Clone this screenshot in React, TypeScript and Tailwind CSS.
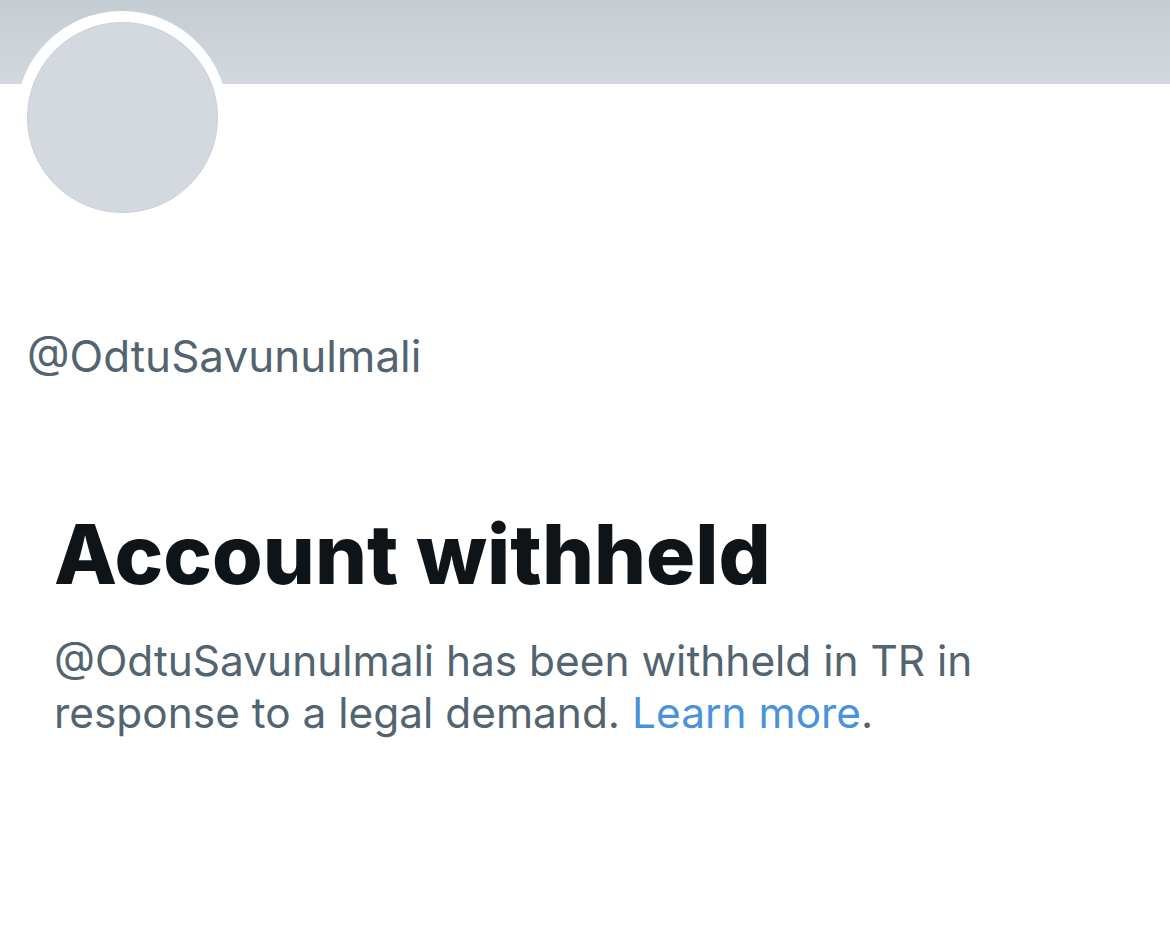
import React from "react";

export default function App() {
  return (
    <div className="relative w-[1170px] h-[947px] bg-white overflow-hidden" style={{ fontFamily: "Inter, 'Noto Sans', sans-serif" }}>
      <div className="h-[84px] w-full bg-gradient-to-b from-[#c6cdd2] to-[#d2d8dd]" />
      <div className="absolute left-[16px] top-[11px] w-[212px] h-[212px] rounded-full bg-white flex items-center justify-center">
        <div className="w-[191px] h-[191px] rounded-full bg-[#d3d9df] border border-[#c9d0d5]" />
      </div>
      <div className="pt-[246px] pl-[27px]">
        <div className="text-[44px] leading-[52px] text-[#536471]">@OdtuSavunulmali</div>
      </div>
      <div className="pt-[125px] pl-[54px]">
        <h1 className="text-[82px] leading-[96px] font-extrabold text-[#0f1419]">Account withheld</h1>
        <p className="mt-[32px] text-[42.4px] leading-[52px] text-[#536471] w-[980px]">
          @OdtuSavunulmali has been withheld in TR in response to a legal demand.{" "}
          <span className="text-[#4a92da]">Learn more</span>.
        </p>
      </div>
    </div>
  );
}
